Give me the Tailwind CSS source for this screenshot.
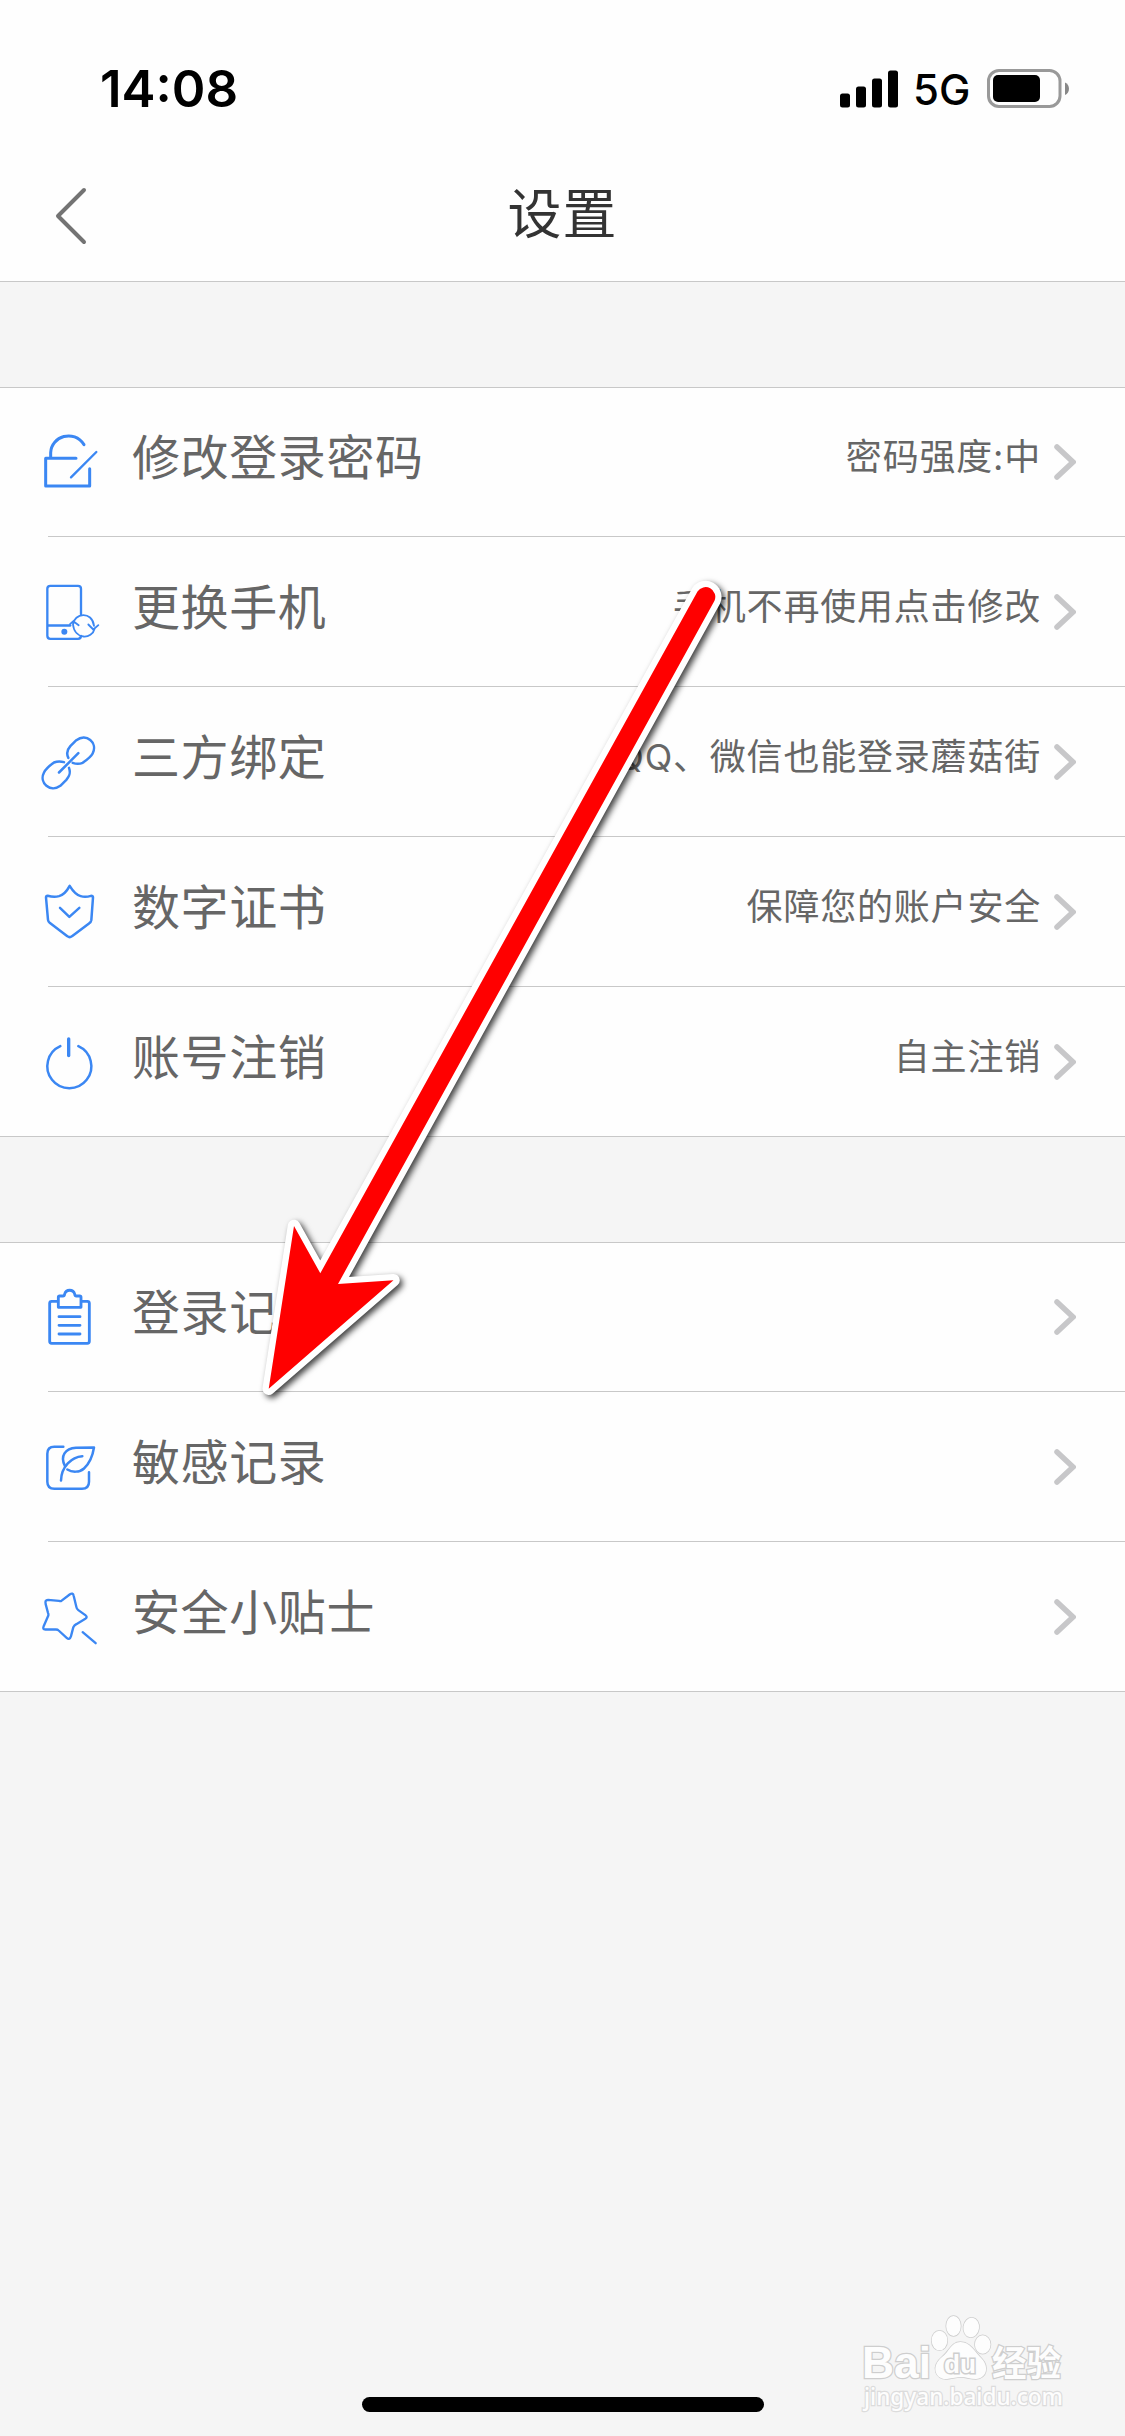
<!DOCTYPE html>
<html lang="zh-CN">
<head>
  <meta charset="UTF-8" />
  <meta name="viewport" content="width=device-width, initial-scale=1.0"/>
  <title>设置</title>
  <script src="https://cdn.jsdelivr.net/npm/@tailwindcss/browser@4"></script>
</head>
<body class="bg-[#f5f5f5] font-['Inter','Noto_Sans_CJK_SC',sans-serif]">
  <div class="relative w-[1125px] h-[2436px] overflow-hidden flex flex-col">

    <header class="h-[282px] shrink-0 bg-[#fefefe] border-b border-[#c8c8c8] flex flex-col">
      <!-- status bar -->
      <div class="h-[132px] flex items-center justify-between pl-[100px] pr-14 pt-[45px]">
        <span class="text-[51px] leading-[50px] font-semibold text-black">14:08</span>
        <div class="flex items-center">
          <svg class="w-[58px] h-[38px]" viewBox="0 0 58 38">
            <rect x="0" y="23.500" width="10" height="14" rx="2.500"/>
            <rect x="16" y="16.500" width="10" height="21" rx="2.500"/>
            <rect x="32" y="8.500" width="10" height="29" rx="2.500"/>
            <rect x="48" y="0.500" width="10" height="37" rx="2.500"/>
          </svg>
          <span class="w-[89px] pl-[15px] pt-[3px] text-[42px] leading-[42px] font-medium text-black">5G</span>
          <svg class="w-[82px] h-[39px]" viewBox="0 0 82 39">
            <rect x="1.500" y="1.500" width="71.500" height="36" rx="10.500" fill="none" stroke="#999" stroke-width="3"/>
            <rect x="6" y="6" width="47" height="27" rx="5"/>
            <path d="M78 13.500c5.300 2 5.300 10.500 0 12.500z" fill="#888"/>
          </svg>
        </div>
      </div>

      <!-- title bar -->
      <div class="flex-1 grid grid-cols-3 items-center px-[54px] pt-[19px]">
        <svg class="w-[34px] h-[58px]" viewBox="0 0 34 58">
          <path d="M30 3L4 29L30 55" fill="none" stroke="#737373" stroke-width="4" stroke-linecap="round" stroke-linejoin="round"/>
        </svg>
        <h1 class="text-[54px] leading-[54px] tracking-[1px] pb-[2px] text-center text-[#333]">设置</h1>
      </div>
    </header>

    <section class="mt-[105px] bg-[#fefefe] border-y border-[#c8c8c8] text-[#666]">
      <div class="ml-12 h-[149px] pr-[49px] flex items-center border-b border-[#c8c8c8]">
        <svg class="w-[60px] h-[60px] -ml-2 mr-8" viewBox="120 96 180 180" fill="none" stroke="#3b87f3" stroke-width="9" stroke-linecap="round" stroke-linejoin="round">
          <path d="M228 175H137V258H269V206M152 171V158C154 108 222 87 252 134"/>
          <path d="M289 156L213 232" stroke-width="7"/>
        </svg>
        <span class="flex-1 text-[48px] leading-[48px] tracking-[0.6px] pb-2">修改登录密码</span>
        <span class="text-[36px] leading-[36px] tracking-[0.8px] pb-2.5">密码强度:中</span>
        <svg class="ml-[13px] w-[22px] h-[36px]" viewBox="0 0 22 36"><path d="M3 3L19 18L3 33" fill="none" stroke="#c7c7c9" stroke-width="5.500" stroke-linecap="round"/></svg>
      </div>
      <div class="ml-12 h-[150px] pr-[49px] flex items-center border-b border-[#c8c8c8]">
        <svg class="w-[60px] h-[60px] -ml-2 mr-8" viewBox="120 544.5 180 180" fill="none" stroke="#3b87f3" stroke-width="7" stroke-linecap="round" stroke-linejoin="round">
          <path d="M243 641V565Q243 556 234 556H151Q142 556 142 565V706Q142 715 151 715H234Q243 715 243 706M142 675H211"/>
          <circle cx="193" cy="694" r="9" fill="#3b87f3" stroke="none"/>
          <path d="M219 672C222 638 276 630 282 676M284 684C276 718 224 718 219 672M210 671L220 662L236 674M265 672L280 687L295 674" stroke-width="5.500"/>
        </svg>
        <span class="flex-1 text-[48px] leading-[48px] tracking-[0.6px] pb-2">更换手机</span>
        <span class="text-[36px] leading-[36px] tracking-[0.8px] pb-2.5">手机不再使用点击修改</span>
        <svg class="ml-[13px] w-[22px] h-[36px]" viewBox="0 0 22 36"><path d="M3 3L19 18L3 33" fill="none" stroke="#c7c7c9" stroke-width="5.500" stroke-linecap="round"/></svg>
      </div>
      <div class="ml-12 h-[150px] pr-[49px] flex items-center border-b border-[#c8c8c8]">
        <svg class="w-[60px] h-[60px] -ml-2 mr-8" viewBox="120 124.5 180 180" fill="none" stroke="#3b87f3" stroke-width="7.500" stroke-linecap="round" stroke-linejoin="round">
          <path d="M205 202C198 188 202 177 211 167L229 149C259 127 294 156 278 189C273 199 258 210 248 217Q234 223 218 217"/>
          <path d="M207 232C213 249 208 258 199 268L181 286C151 308 116 277 132 246C137 236 152 223 162 216Q176 210 192 215"/>
          <path d="M235 188L177 246"/>
        </svg>
        <span class="flex-1 text-[48px] leading-[48px] tracking-[0.6px] pb-2">三方绑定</span>
        <span class="text-[36px] leading-[36px] tracking-[0.8px] pb-2.5">QQ、微信也能登录蘑菇街</span>
        <svg class="ml-[13px] w-[22px] h-[36px]" viewBox="0 0 22 36"><path d="M3 3L19 18L3 33" fill="none" stroke="#c7c7c9" stroke-width="5.500" stroke-linecap="round"/></svg>
      </div>
      <div class="ml-12 h-[150px] pr-[49px] flex items-center border-b border-[#c8c8c8]">
        <svg class="w-[60px] h-[60px] -ml-2 mr-8" viewBox="120 574.5 180 180" fill="none" stroke="#3b87f3" stroke-width="7.500" stroke-linecap="round" stroke-linejoin="round">
          <path d="M209 586C199 605 190 613 177 617Q162 621 143 616Q138 616 138 621L144 688Q145 694 149 697L202 737Q209 743 216 737L268 698Q273 695 274 689L279 621Q279 616 273 616Q256 621 242 617C229 613 220 604 209 586Z"/>
          <path d="M180 652L208 679L238 652"/>
        </svg>
        <span class="flex-1 text-[48px] leading-[48px] tracking-[0.6px] pb-2">数字证书</span>
        <span class="text-[36px] leading-[36px] tracking-[0.8px] pb-2.5">保障您的账户安全</span>
        <svg class="ml-[13px] w-[22px] h-[36px]" viewBox="0 0 22 36"><path d="M3 3L19 18L3 33" fill="none" stroke="#c7c7c9" stroke-width="5.500" stroke-linecap="round"/></svg>
      </div>
      <div class="ml-12 h-[149px] pr-[49px] flex items-center">
        <svg class="w-[60px] h-[60px] -ml-2 mr-8" viewBox="120 214.5 180 180" fill="none" stroke="#3b87f3" stroke-width="7.500" stroke-linecap="round" stroke-linejoin="round">
          <path d="M181 257A66 66 0 1 0 235 257"/>
          <path d="M206 235V285" stroke-width="10"/>
        </svg>
        <span class="flex-1 text-[48px] leading-[48px] tracking-[0.6px] pb-2">账号注销</span>
        <span class="text-[36px] leading-[36px] tracking-[0.8px] pb-2.5">自主注销</span>
        <svg class="ml-[13px] w-[22px] h-[36px]" viewBox="0 0 22 36"><path d="M3 3L19 18L3 33" fill="none" stroke="#c7c7c9" stroke-width="5.500" stroke-linecap="round"/></svg>
      </div>
    </section>

    <section class="mt-[105px] bg-[#fefefe] border-y border-[#c8c8c8] text-[#666]">
      <div class="ml-12 h-[149px] pr-[49px] flex items-center border-b border-[#c8c8c8]">
        <svg class="w-[60px] h-[60px] -ml-2 mr-8" viewBox="120 201 180 180" fill="none" stroke="#3b87f3" stroke-width="8.500" stroke-linecap="round" stroke-linejoin="round">
          <path d="M173 244H155Q149 244 149 250V364Q149 370 155 370H262Q268 370 268 364V250Q268 244 262 244H245"/>
          <path d="M175 262V232Q175 228 179 228H189Q193 228 194 222C198 207 220 207 224 222Q225 228 229 228H239Q243 228 243 232V262Z"/>
          <path d="M177 290H240M177 316H240M177 342H240"/>
        </svg>
        <span class="flex-1 text-[48px] leading-[48px] tracking-[0.6px] pb-2">登录记录</span>
        <svg class="ml-[13px] w-[22px] h-[36px]" viewBox="0 0 22 36"><path d="M3 3L19 18L3 33" fill="none" stroke="#c7c7c9" stroke-width="5.500" stroke-linecap="round"/></svg>
      </div>
      <div class="ml-12 h-[150px] pr-[49px] flex items-center border-b border-[#c8c8c8]">
        <svg class="w-[60px] h-[60px] -ml-2 mr-8" viewBox="120 49.5 180 180" fill="none" stroke="#3b87f3" stroke-width="7.500" stroke-linecap="round" stroke-linejoin="round">
          <path d="M190 79H163Q142 79 142 100V184Q142 205 163 205H246Q267 205 267 184V155"/>
          <path d="M183 180C184 138 215 109 247 107"/>
          <path d="M195 137C179 106 196 84 228 82L282 81C277 112 264 133 252 144C239 156 216 156 202 147"/>
        </svg>
        <span class="flex-1 text-[48px] leading-[48px] tracking-[0.6px] pb-2">敏感记录</span>
        <svg class="ml-[13px] w-[22px] h-[36px]" viewBox="0 0 22 36"><path d="M3 3L19 18L3 33" fill="none" stroke="#c7c7c9" stroke-width="5.500" stroke-linecap="round"/></svg>
      </div>
      <div class="ml-12 h-[149px] pr-[49px] flex items-center">
        <svg class="w-[60px] h-[60px] -ml-2 mr-8" viewBox="120 499.5 180 180" fill="none" stroke="#3b87f3" stroke-width="7" stroke-linecap="round" stroke-linejoin="round">
          <path d="M183 542L209 522Q219 515 221 526L229 559Q230 565 235 569L256 584Q264 590 256 595L229 611Q223 614 220 620L213 647Q209 660 200 652L176 630Q173 627 168 627H136Q127 627 131 617L145 585Q146 581 144 577L137 551Q134 538 144 538L177 541Q180 542 183 542Z"/>
          <path d="M248 635L287 668"/>
        </svg>
        <span class="flex-1 text-[48px] leading-[48px] tracking-[0.6px] pb-2">安全小贴士</span>
        <svg class="ml-[13px] w-[22px] h-[36px]" viewBox="0 0 22 36"><path d="M3 3L19 18L3 33" fill="none" stroke="#c7c7c9" stroke-width="5.500" stroke-linecap="round"/></svg>
      </div>
    </section>

    <!-- home indicator -->
    <div class="mt-auto mb-6 self-center w-[402px] h-[15px] rounded-full bg-black"></div>

    <!-- pointer arrow -->
    <svg class="absolute inset-0 w-[1125px] h-[2436px] pointer-events-none drop-shadow-[3px_3px_3px_rgba(0,0,0,0.75)]" viewBox="0 0 1125 2436">
      <path d="M697.500 591.500A9.700 9.700 0 0 1 714.500 600.700L338 1284L393.500 1280.300L268.700 1388.700L294 1226L320.300 1273.300Z" fill="#f00" stroke="#fff" stroke-width="12.500" stroke-linejoin="round" paint-order="stroke"/>
    </svg>

    <!-- watermark -->
    <svg class="absolute right-0 bottom-0 w-[285px] h-[146px]" viewBox="0 0 285 146" fill="#fdfdfd" stroke="#cecece" stroke-width="1.500" paint-order="stroke">
      <text x="22" y="88" font-family="Liberation Sans" font-weight="700" font-size="44" textLength="69" lengthAdjust="spacingAndGlyphs" stroke-width="2.500">Bai</text>
      <ellipse cx="99.500" cy="50.500" rx="7.800" ry="9.800"/>
      <ellipse cx="113.500" cy="36" rx="7.300" ry="10"/>
      <ellipse cx="131.300" cy="37.500" rx="7.800" ry="9.800" transform="rotate(8 131 37)"/>
      <ellipse cx="142.700" cy="54.500" rx="7.800" ry="9.300"/>
      <path d="M120.500 52C111 52 110 61 102 67C90 77 96 90 107 89C113 88 117 87 121 87C126 87 130 89 136 89C147 88 149 77 142 69C134 61 130 52 120.500 52Z"/>
      <text x="104" y="83" font-family="Liberation Sans" font-weight="700" font-size="26" textLength="32" lengthAdjust="spacingAndGlyphs" stroke-width="3">du</text>
      <text x="152" y="86" font-family="Noto Sans CJK SC" font-weight="700" font-size="35" textLength="69" lengthAdjust="spacingAndGlyphs" stroke-width="2.500">经验</text>
      <text x="24" y="115" font-family="Noto Sans" font-weight="500" font-size="24" textLength="199" lengthAdjust="spacingAndGlyphs" stroke="#dcdcdc" stroke-width="2.500">jingyan.baidu.com</text>
    </svg>
  </div>
</body>
</html>
